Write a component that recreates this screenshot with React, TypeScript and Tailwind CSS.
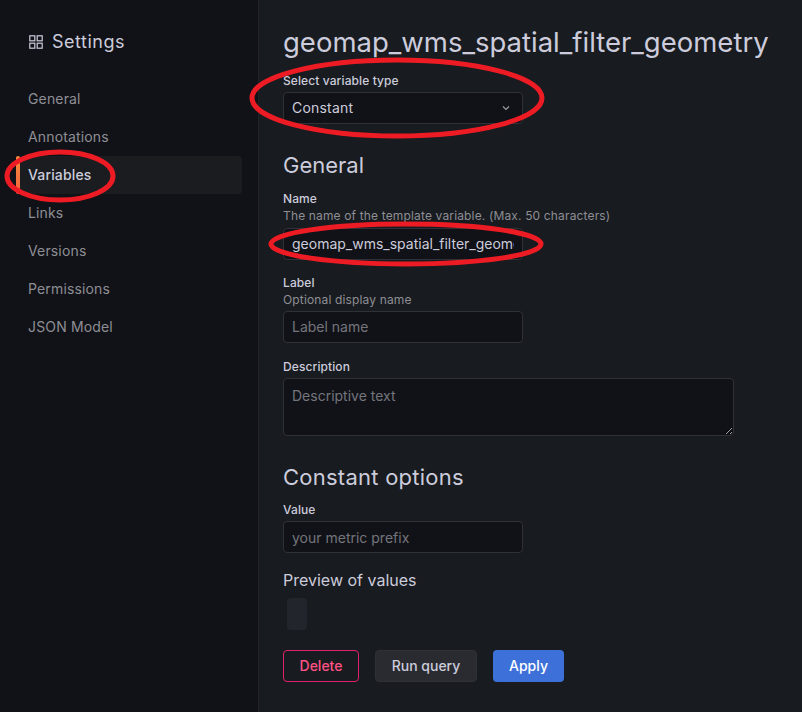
const navItems = ["General", "Annotations", "Variables", "Links", "Versions", "Permissions", "JSON Model"];

const labelCls = "block text-xs font-medium leading-[15px] tracking-[0.1px] text-[#ccccdc]";
const descCls = "block text-xs leading-[15px] tracking-[0.15px] text-[#8e8e95]";
const fieldCls =
  "h-8 w-60 rounded-sm border border-[#2f3136] bg-[#111217] px-2 text-sm text-[#ccccdc] outline-none placeholder:text-[#74757d]";

function Sidebar() {
  return (
    <aside className="w-[259px] shrink-0 border-r border-[#202226] bg-[#111217] pt-[30px]">
      <div className="flex h-6 items-center pl-[29px] text-[18px] leading-6 tracking-[0.5px] text-[#ccccdc]">
        <svg width="14" height="14" viewBox="0 0 14 14" fill="none" stroke="#ccccdc" strokeWidth="1.2" className="mr-[9px]">
          <rect x="0.8" y="0.8" width="5" height="5" />
          <rect x="8.2" y="0.8" width="5" height="5" />
          <rect x="0.8" y="8.2" width="5" height="5" />
          <rect x="8.2" y="8.2" width="5" height="5" />
        </svg>
        Settings
      </div>
      <nav className="mt-[26px] flex flex-col pl-4 pr-4 tracking-[0.15px]">
        {navItems.map((item) =>
          item === "Variables" ? (
            <div key={item} className="flex h-[38px] items-center rounded-sm bg-[#1a1c20] text-sm font-medium text-[#ccccdc]">
              <span className="mr-2 h-full w-1 rounded-sm bg-gradient-to-b from-[#f58a3a] to-[#f55f3e]" />
              {item}
            </div>
          ) : (
            <div key={item} className="flex h-[38px] items-center pl-3 text-sm text-[#8e8e95]">
              {item}
            </div>
          )
        )}
      </nav>
    </aside>
  );
}

function Form() {
  return (
    <main className="flex-1 bg-[#181b1f] pl-6 pt-[24px]">
      <h1 className="text-[27.5px] leading-9 whitespace-nowrap text-[#ccccdc]">geomap_wms_spatial_filter_geometry</h1>

      <label className={`mt-[13px] ${labelCls}`}>Select variable type</label>
      <div className="mt-[4px] flex h-8 w-60 items-center justify-between rounded-sm border border-[#2f3136] bg-[#111217] pl-2 pr-[11px] text-sm tracking-[0.2px] text-[#ccccdc]">
        Constant
        <svg width="10" height="10" viewBox="0 0 10 10" fill="none" stroke="#9a9aa2" strokeWidth="1.2">
          <path d="M2 3.5 L5 6.5 L8 3.5" />
        </svg>
      </div>

      <h2 className="mt-[26px] text-[22px] leading-[30px] text-[#ccccdc]">General</h2>

      <label className={`mt-[11px] ${labelCls}`}>Name</label>
      <span className={`mt-[2px] ${descCls}`}>The name of the template variable. (Max. 50 characters)</span>
      <input className={`mt-[5px] block ${fieldCls} pb-[2px]`} readOnly value="geomap_wms_spatial_filter_geometry" />

      <label className={`mt-[15px] ${labelCls}`}>Label</label>
      <span className={`mt-[2px] ${descCls}`}>Optional display name</span>
      <input className={`mt-[4px] block ${fieldCls} pb-[2px]`} placeholder="Label name" />

      <label className={`mt-[16px] ${labelCls}`}>Description</label>
      <textarea
        className="mt-[4px] block h-[58px] w-[451px] rounded-sm border border-[#2f3136] bg-[#111217] px-2 pb-1 pt-[7px] text-sm text-[#ccccdc] outline-none placeholder:text-[#74757d]"
        placeholder="Descriptive text"
      />

      <h2 className="mt-[26px] text-[22px] leading-[30px] tracking-[0.25px] text-[#ccccdc]">Constant options</h2>

      <label className={`mt-[10px] ${labelCls}`}>Value</label>
      <input className={`mt-[4px] block ${fieldCls}`} placeholder="your metric prefix" />

      <h3 className="mt-[17px] text-base leading-5 text-[#ccccdc]">Preview of values</h3>
      <div className="ml-1 mt-[8px] h-8 w-5 rounded-sm bg-[#22252b]" />

      <div className="mt-5 flex gap-4">
        <button className="h-8 w-[76px] rounded-sm border border-[#e0226e] bg-transparent text-sm font-medium text-[#ff5286]">Delete</button>
        <button className="h-8 w-[102px] rounded-sm border border-[#2f3136] bg-[#2a2b30] text-sm font-medium text-[#ccccdc]">Run query</button>
        <button className="h-8 w-[71px] rounded-sm bg-[#3d71d9] text-sm font-medium text-white">Apply</button>
      </div>
    </main>
  );
}

export default function App() {
  return (
    <div className="relative flex h-[712px] w-[802px] overflow-hidden bg-[#181b1f] font-['Inter',sans-serif]">
      <Sidebar />
      <Form />
      {/* hand drawn highlight circles */}
      <svg className="pointer-events-none absolute left-0 top-0" width="802" height="712" fill="none" stroke="#ed1c24" strokeWidth="5">
        <ellipse cx="397" cy="98" rx="145" ry="38" />
        <ellipse cx="60" cy="176" rx="53" ry="24" />
        <ellipse cx="406" cy="244" rx="135" ry="20" />
      </svg>
    </div>
  );
}
